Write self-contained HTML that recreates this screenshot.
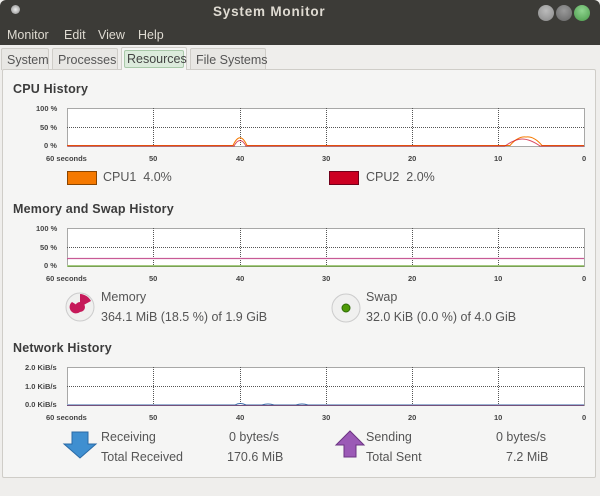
<!DOCTYPE html>
<html><head><meta charset="utf-8"><style>
*{margin:0;padding:0;box-sizing:border-box}
body{width:600px;height:496px;overflow:hidden;background:#efeeec;font-family:"Liberation Sans",sans-serif;position:relative;color:#3c3c3c}
.t{position:absolute;white-space:nowrap}
#title{position:absolute;left:0;top:0;width:600px;height:45px;background:#3c3b37;border-radius:6px 6px 0 0}
.menu{color:#dfdbd2;font-size:12.5px;top:28px}
.tab{position:absolute;top:48px;height:22px;border:1px solid #cfcdc8;border-bottom:none;background:#e8e7e4;font-size:12.5px;color:#555;padding:4px 5px;border-radius:2px 2px 0 0;white-space:nowrap}
#panel{position:absolute;left:2px;top:69px;width:594px;height:409px;background:#f5f5f4;border:1px solid #cfcdc8;border-radius:2px}
h{position:absolute;font-weight:bold;font-size:12.5px;color:#3c3c3c;white-space:nowrap;letter-spacing:0.2px}
.sm{font-size:7.5px;color:#444;font-weight:bold}
.n{font-size:12.5px;color:#555}
</style></head><body>
<div id="title"></div>
<div class="t" style="left:11px;top:5px;width:9px;height:9px;border-radius:50%;background:radial-gradient(#eee,#888)"></div>
<div class="t" style="left:213px;top:4px;font-size:13.5px;font-weight:bold;color:#dfdbd2;letter-spacing:0.8px">System Monitor</div>
<div class="t" style="left:538px;top:5px;width:16px;height:16px;border-radius:50%;background:radial-gradient(circle at 50% 35%,#bbb,#888)"></div>
<div class="t" style="left:556px;top:5px;width:16px;height:16px;border-radius:50%;background:radial-gradient(circle at 50% 35%,#999,#666)"></div>
<div class="t" style="left:574px;top:5px;width:16px;height:16px;border-radius:50%;background:radial-gradient(circle at 50% 35%,#8fd48f,#4a9a4a)"></div>
<div class="t menu" style="left:7px">Monitor</div>
<div class="t menu" style="left:64px">Edit</div>
<div class="t menu" style="left:98px">View</div>
<div class="t menu" style="left:138px">Help</div>
<div class="tab" style="left:1px;width:48px">System</div>
<div class="tab" style="left:52px;width:66px">Processes</div>
<div class="tab" style="left:190px;width:76px">File Systems</div>
<div id="panel"></div>
<div class="tab" style="left:121px;top:47px;width:66px;height:23px;background:#f5f5f4;border-color:#cfcdc8;z-index:2;padding:2px"><div style="border:1px solid #a9c9a9;background:#dcebdc;color:#444;padding:1px 2px;border-radius:2px">Resources</div></div>
<svg class="t" style="left:0;top:0" width="600" height="496">
<g stroke="#555" stroke-width="1" stroke-dasharray="1,1" fill="none">
<rect x="67.5" y="108.5" width="517" height="38" fill="#fff"/>
<path d="M67 127.5H584M153.5 108V146M240.5 108V146M326.5 108V146M412.5 108V146M498.5 108V146"/>
<rect x="67.5" y="228.5" width="517" height="38" fill="#fff"/>
<path d="M67 247.5H584M153.5 228V266M240.5 228V266M326.5 228V266M412.5 228V266M498.5 228V266"/>
<rect x="67.5" y="367.5" width="517" height="38" fill="#fff"/>
<path d="M67 386.5H584M153.5 367V405M240.5 367V405M326.5 367V405M412.5 367V405M498.5 367V405"/>
</g>
<path d="M67 145.5H233Q240 130 247 145.5H510Q518 136 526 137Q534 136 542 145.5H584" stroke="#f57900" stroke-width="1" fill="none"/>
<path d="M67 146H234Q240 135 246 146H505Q515 139 522 139Q530 139 540 146H584" stroke="#cc0022" stroke-width="1" fill="none" opacity=".7"/>
<path d="M67 258.5H584" stroke="#c85a95" stroke-width="1.3"/>
<path d="M67 266H584" stroke="#4e9a06" stroke-width="1"/>
<path d="M67 405H235Q240 402 246 405H262Q268 403 274 405H296Q302 403 308 405H584" stroke="#3465a4" stroke-width="1" fill="none"/>
<path d="M67 405.5H584" stroke="#75507b" stroke-width="1"/>
<rect x="67.5" y="171.5" width="29" height="13" fill="#f57900" stroke="#8a4500"/>
<rect x="329.5" y="171.5" width="29" height="13" fill="#cc0022" stroke="#70001a"/>
<circle cx="80" cy="307" r="14" fill="#f0f0ef" stroke="#ccc"/>
<path d="M80 307V294A13 13 0 0 1 91 301Z M80 307L72 302A4 4 0 1 0 80 312Z" fill="#c61a5a"/>
<circle cx="80" cy="307" r="5" fill="#c61a5a"/>
<circle cx="346" cy="308" r="14" fill="#f0f0ef" stroke="#ccc"/>
<circle cx="346" cy="308" r="4" fill="#4e9a06" stroke="#2d6a06"/>
<path d="M72 432H88V444H96L80 458L64 444H72Z" fill="#3f8fd0" stroke="#2a6aa6"/>
<path d="M344 457H356V445H364L350 431L336 445H344Z" fill="#9b59b6" stroke="#6c3483"/>
</svg>
<h style="left:13px;top:82px">CPU History</h>
<h style="left:13px;top:202px">Memory and Swap History</h>
<h style="left:13px;top:341px">Network History</h>
<div class="t sm" style="left:36px;top:104px">100 %</div>
<div class="t sm" style="left:40px;top:123px">50 %</div>
<div class="t sm" style="left:44px;top:141px">0 %</div>
<div class="t sm" style="left:36px;top:224px">100 %</div>
<div class="t sm" style="left:40px;top:243px">50 %</div>
<div class="t sm" style="left:44px;top:261px">0 %</div>
<div class="t sm" style="left:25px;top:363px">2.0 KiB/s</div>
<div class="t sm" style="left:25px;top:382px">1.0 KiB/s</div>
<div class="t sm" style="left:25px;top:400px">0.0 KiB/s</div>
<div class="t sm" style="left:46px;top:154px">60 seconds</div><div class="t sm" style="left:149px;top:154px">50</div><div class="t sm" style="left:236px;top:154px">40</div><div class="t sm" style="left:322px;top:154px">30</div><div class="t sm" style="left:408px;top:154px">20</div><div class="t sm" style="left:494px;top:154px">10</div><div class="t sm" style="left:582px;top:154px">0</div>
<div class="t sm" style="left:46px;top:274px">60 seconds</div><div class="t sm" style="left:149px;top:274px">50</div><div class="t sm" style="left:236px;top:274px">40</div><div class="t sm" style="left:322px;top:274px">30</div><div class="t sm" style="left:408px;top:274px">20</div><div class="t sm" style="left:494px;top:274px">10</div><div class="t sm" style="left:582px;top:274px">0</div>
<div class="t sm" style="left:46px;top:413px">60 seconds</div><div class="t sm" style="left:149px;top:413px">50</div><div class="t sm" style="left:236px;top:413px">40</div><div class="t sm" style="left:322px;top:413px">30</div><div class="t sm" style="left:408px;top:413px">20</div><div class="t sm" style="left:494px;top:413px">10</div><div class="t sm" style="left:582px;top:413px">0</div>
<div class="t n" style="left:103px;top:170px">CPU1&nbsp; 4.0%</div>
<div class="t n" style="left:366px;top:170px">CPU2&nbsp; 2.0%</div>
<div class="t n" style="left:101px;top:290px">Memory</div>
<div class="t n" style="left:101px;top:310px">364.1 MiB (18.5 %) of 1.9 GiB</div>
<div class="t n" style="left:366px;top:290px">Swap</div>
<div class="t n" style="left:366px;top:310px">32.0 KiB (0.0 %) of 4.0 GiB</div>
<div class="t n" style="left:101px;top:430px">Receiving</div>
<div class="t n" style="left:101px;top:450px">Total Received</div>
<div class="t n" style="left:229px;top:430px">0 bytes/s</div>
<div class="t n" style="left:227px;top:450px">170.6 MiB</div>
<div class="t n" style="left:366px;top:430px">Sending</div>
<div class="t n" style="left:366px;top:450px">Total Sent</div>
<div class="t n" style="left:496px;top:430px">0 bytes/s</div>
<div class="t n" style="left:506px;top:450px">7.2 MiB</div>
</body></html>
